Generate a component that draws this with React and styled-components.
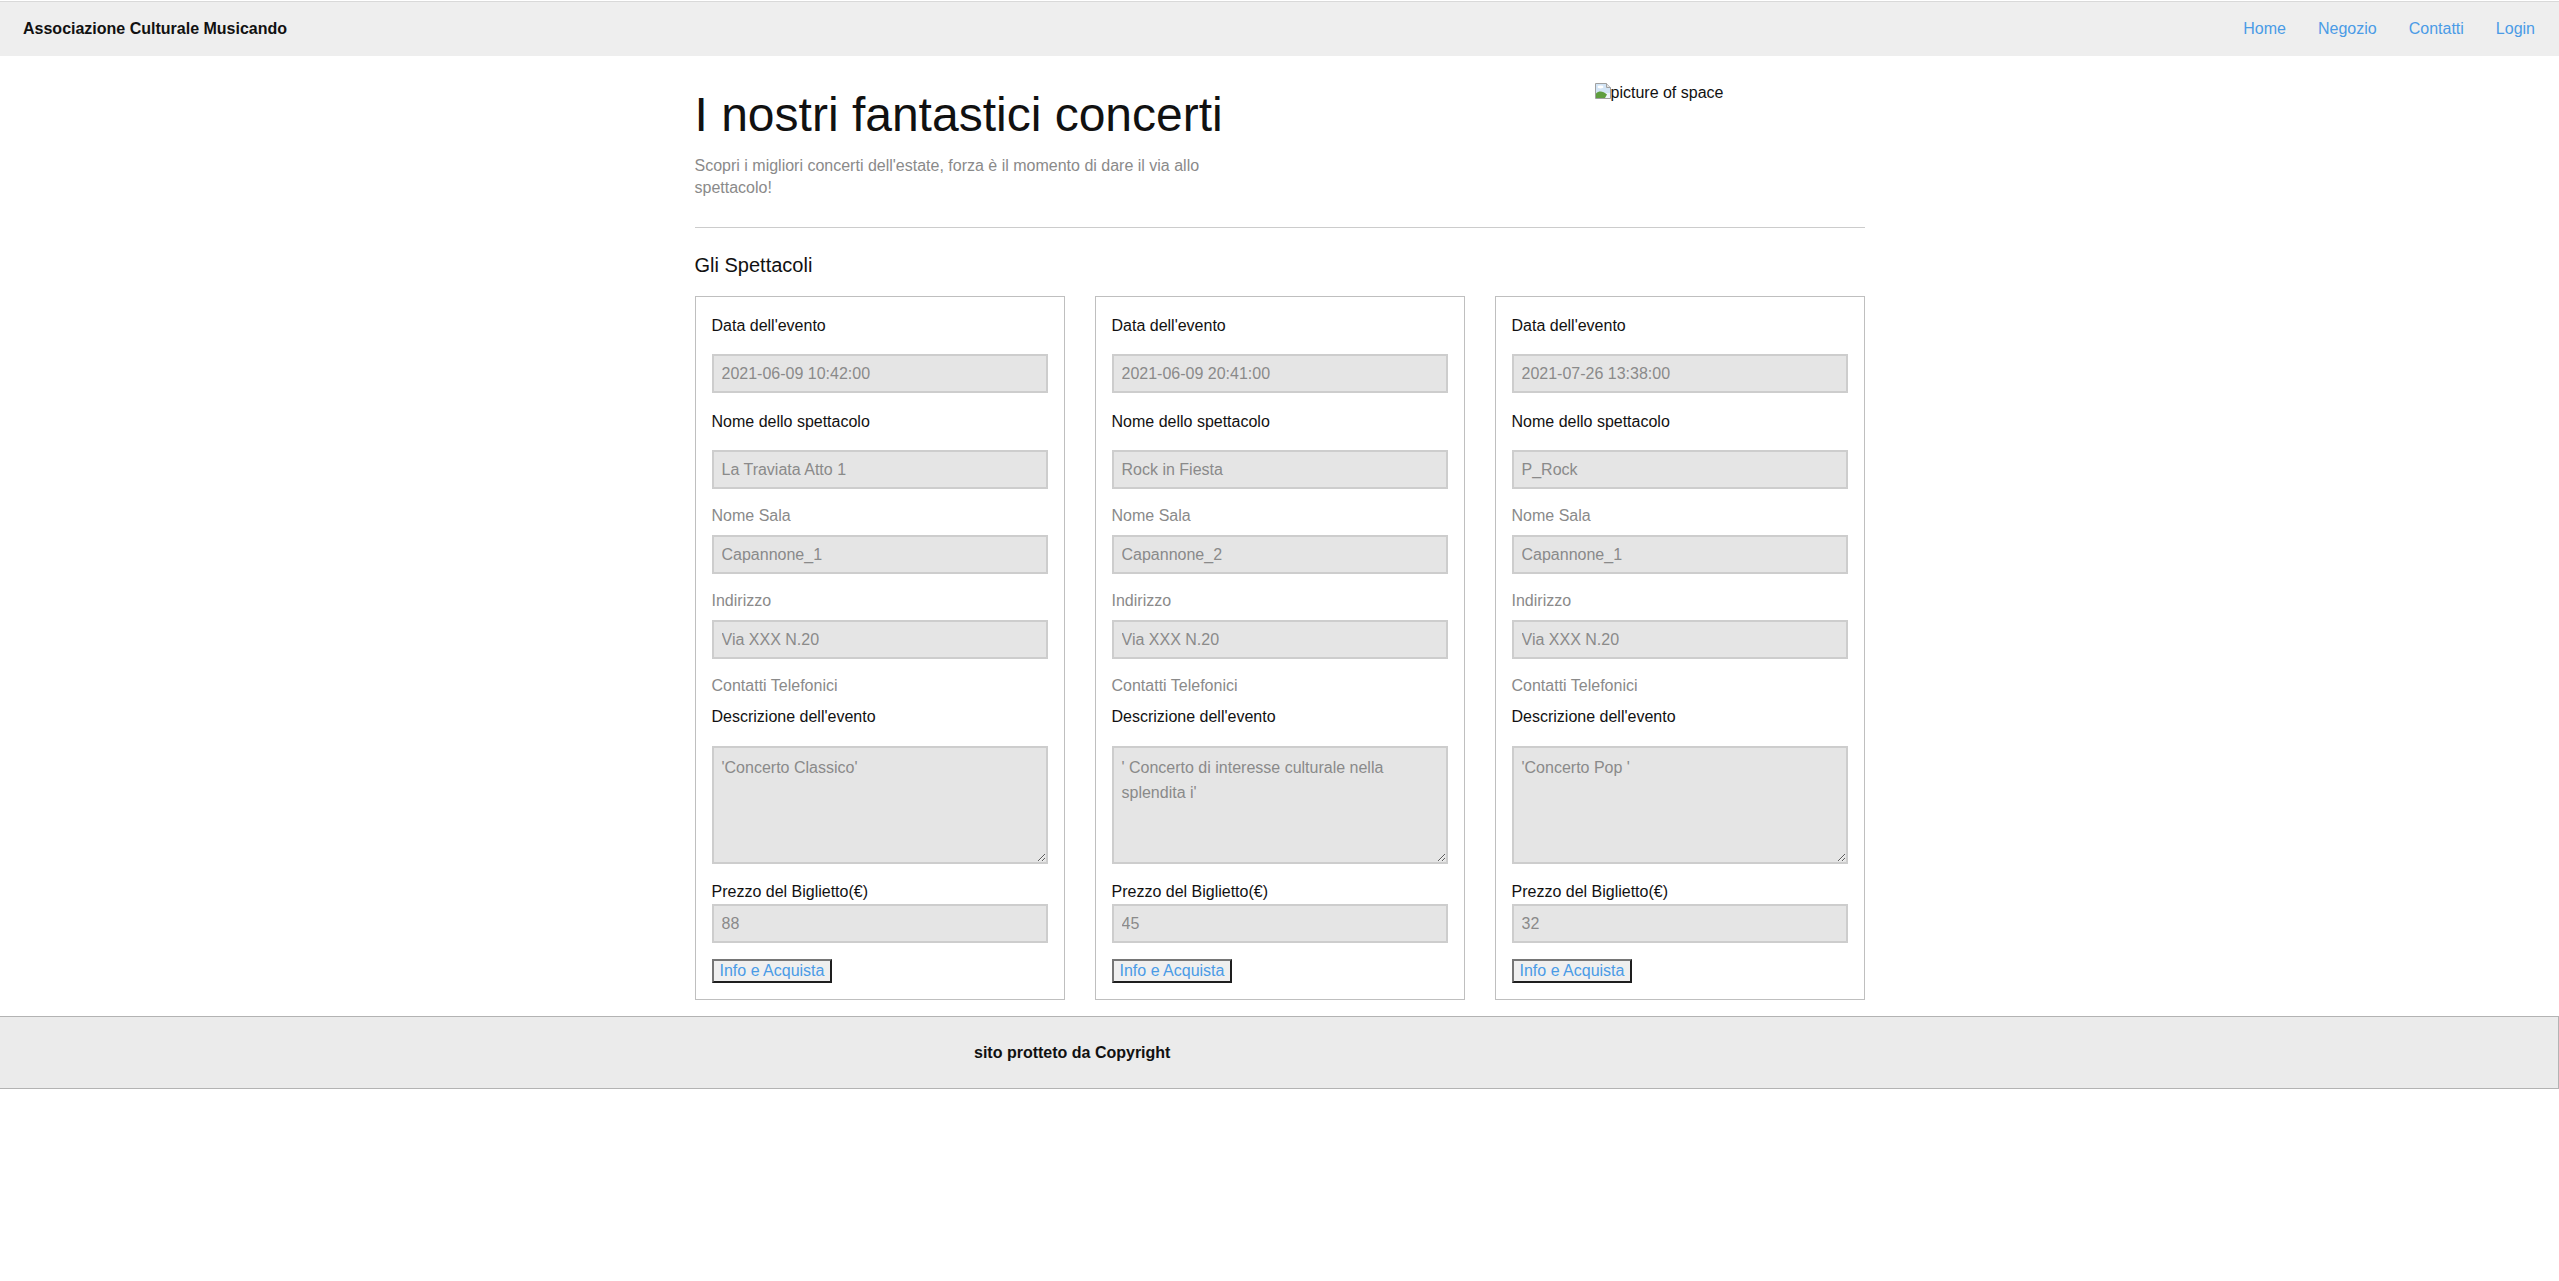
import React from "react";
import styled, { createGlobalStyle } from "styled-components";

const GlobalStyle = createGlobalStyle`
  html, body { margin: 0; padding: 0; background: #fff; }
  body {
    font-family: "Liberation Sans", Arial, sans-serif;
    font-size: 16px;
    color: #111;
  }
  * { box-sizing: border-box; }
`;

const Navbar = styled.header`
  margin-top: 1px;
  height: 55px;
  border-top: 1px solid #d9d9d9;
  background: #eeeeee;
  display: flex;
  align-items: center;
  justify-content: space-between;
  padding: 0 24px 0 23px;
`;

const Brand = styled.div`
  font-weight: bold;
  font-size: 16px;
  color: #111;
`;

const NavLinks = styled.nav`
  display: flex;
  gap: 32px;
`;

const NavLink = styled.a`
  font-size: 16px;
  color: #4a9be6;
  text-decoration: none;
`;

const Main = styled.main`
  width: 1170px;
  margin: 0 auto;
`;

const Hero = styled.section`
  display: grid;
  grid-template-columns: 900px 1fr;
  padding-top: 26px;
`;

const Intro = styled.div`
  max-width: 560px;
`;

const Title = styled.h1`
  margin: 5px 0 0;
  font-size: 48px;
  line-height: 56px;
  font-weight: normal;
  color: #111;
`;

const Subtitle = styled.p`
  margin: 12px 0 0;
  font-size: 16px;
  line-height: 22px;
  color: #8a8a8a;
`;

const BrokenImage = styled.div`
  display: flex;
  align-items: flex-start;
  gap: 0;
  font-size: 16px;
  line-height: 18px;
  color: #111;
  span { margin-top: 2px; }
  svg { flex: none; }
`;

const Divider = styled.hr`
  margin: 28px 0 0;
  border: 0;
  border-top: 1px solid #cccccc;
  height: 0;
`;

const SectionTitle = styled.h2`
  margin: 25px 0 0;
  font-size: 20px;
  line-height: 24px;
  font-weight: normal;
  color: #111;
`;

const CardGrid = styled.div`
  margin-top: 19px;
  display: grid;
  grid-template-columns: repeat(3, 370px);
  column-gap: 30px;
`;

const Card = styled.article`
  border: 1px solid #bfbfbf;
  padding: 20px 16px 16px;
  display: flex;
  flex-direction: column;
  align-items: flex-start;
`;

const Label = styled.label`
  display: block;
  font-size: 16px;
  line-height: 18px;
  color: ${(p) => (p.$muted ? "#8a8a8a" : "#111")};
  margin-top: ${(p) => p.$mt || 0}px;
`;

const Field = styled.input`
  display: block;
  width: 100%;
  height: 39px;
  margin: ${(p) => p.$mt || 0}px 0 0;
  padding: 0 8px;
  border: 2px solid #cdcdcd;
  background: #e5e5e5;
  color: #8a8a8a;
  font-family: "Liberation Sans", Arial, sans-serif;
  font-size: 16px;
  outline: none;
`;

const Notes = styled.textarea`
  display: block;
  width: 100%;
  height: 118px;
  margin: ${(p) => p.$mt || 0}px 0 0;
  padding: 7px 8px;
  border: 2px solid #cdcdcd;
  background: #e5e5e5;
  color: #8a8a8a;
  font-family: "Liberation Sans", Arial, sans-serif;
  font-size: 16px;
  line-height: 25px;
  outline: none;
  overflow: hidden;
`;

const BuyButton = styled.button`
  margin-top: 16px;
  height: 24px;
  padding: 1px 6px;
  background: #efefef;
  border: 2px solid;
  border-color: #767676 #1e1e1e #1e1e1e #767676;
  color: #4a9be6;
  font-family: "Liberation Sans", Arial, sans-serif;
  font-size: 16px;
  line-height: 18px;
  cursor: pointer;
`;

const Footer = styled.footer`
  margin-top: 16px;
  height: 73px;
  background: #ebebeb;
  border: 1px solid #b3b3b3;
  border-left: 0;
  display: flex;
  align-items: center;
  padding-left: 974px;
`;

const FooterText = styled.p`
  margin: 0;
  font-size: 16px;
  font-weight: bold;
  color: #111;
`;

const BrokenIcon = () => (
  <svg width="16" height="18" viewBox="0 0 16 18" aria-hidden="true">
    <path d="M0.5 1.5h11l4 4v11h-15z" fill="#eef4fa" stroke="#a0a0a0" />
    <path d="M1 2h10.5v4h3.5v5H1z" fill="#d3e5f6" />
    <ellipse cx="5.5" cy="5" rx="3" ry="1.4" fill="#ffffff" />
    <path d="M1 16v-4.5C4 8.5 8 9 12 12.5L10 16z" fill="#5f9e3f" />
    <path d="M11.5 1.5v4h4" fill="#e2e2e2" stroke="#a0a0a0" />
  </svg>
);

const shows = [
  {
    date: "2021-06-09 10:42:00",
    name: "La Traviata Atto 1",
    hall: "Capannone_1",
    address: "Via XXX N.20",
    description: "'Concerto Classico'",
    price: "88",
  },
  {
    date: "2021-06-09 20:41:00",
    name: "Rock in Fiesta",
    hall: "Capannone_2",
    address: "Via XXX N.20",
    description: "' Concerto di interesse culturale nella splendita i'",
    price: "45",
  },
  {
    date: "2021-07-26 13:38:00",
    name: "P_Rock",
    hall: "Capannone_1",
    address: "Via XXX N.20",
    description: "'Concerto Pop '",
    price: "32",
  },
];

const ShowCard = ({ show }) => (
  <Card>
    <Label>Data dell'evento</Label>
    <Field $mt={19} readOnly value={show.date} />
    <Label $mt={20}>Nome dello spettacolo</Label>
    <Field $mt={19} readOnly value={show.name} />
    <Label $mt={18} $muted>Nome Sala</Label>
    <Field $mt={10} readOnly value={show.hall} />
    <Label $mt={18} $muted>Indirizzo</Label>
    <Field $mt={10} readOnly value={show.address} />
    <Label $mt={18} $muted>Contatti Telefonici</Label>
    <Label $mt={13}>Descrizione dell'evento</Label>
    <Notes $mt={20} readOnly value={show.description} />
    <Label $mt={19}>Prezzo del Biglietto(€)</Label>
    <Field $mt={3} readOnly value={show.price} />
    <BuyButton type="button">Info e Acquista</BuyButton>
  </Card>
);

export default function App() {
  return (
    <>
      <GlobalStyle />
      <Navbar>
        <Brand>Associazione Culturale Musicando</Brand>
        <NavLinks>
          <NavLink href="#">Home</NavLink>
          <NavLink href="#">Negozio</NavLink>
          <NavLink href="#">Contatti</NavLink>
          <NavLink href="#">Login</NavLink>
        </NavLinks>
      </Navbar>
      <Main>
        <Hero>
          <Intro>
            <Title>I nostri fantastici concerti</Title>
            <Subtitle>
              Scopri i migliori concerti dell'estate, forza è il momento di dare il via allo
              spettacolo!
            </Subtitle>
          </Intro>
          <BrokenImage>
            <BrokenIcon />
            <span>picture of space</span>
          </BrokenImage>
        </Hero>
        <Divider />
        <SectionTitle>Gli Spettacoli</SectionTitle>
        <CardGrid>
          {shows.map((s) => (
            <ShowCard key={s.date} show={s} />
          ))}
        </CardGrid>
      </Main>
      <Footer>
        <FooterText>sito protteto da Copyright</FooterText>
      </Footer>
    </>
  );
}
